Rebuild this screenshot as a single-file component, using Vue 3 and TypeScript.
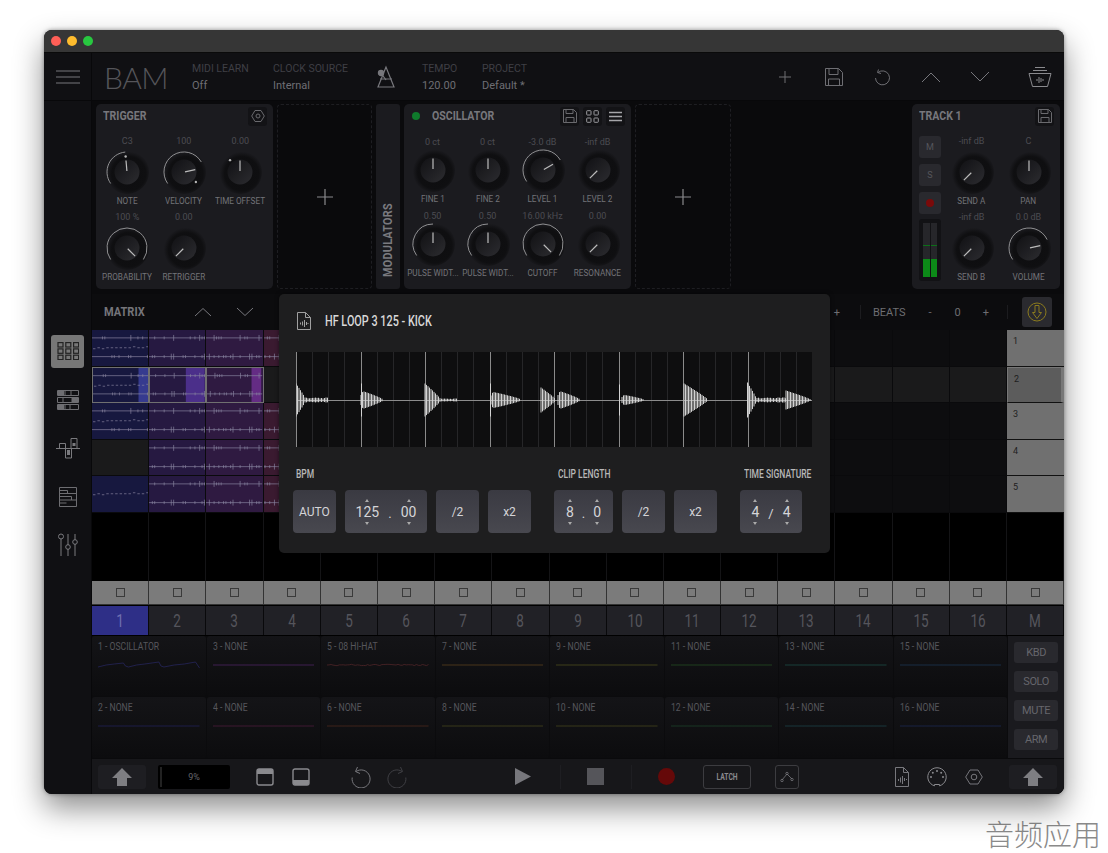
<template>
    <div class="page">
        <div class="window">
            <div class="titlebar">
                <span class="dot red"></span>
                <span class="dot yellow"></span>
                <span class="dot green"></span>
            </div>

            <header class="header">
                <div class="menu-cell">
                    <svg width="24" height="14" viewBox="0 0 24 14"><path d="M0 1h24M0 7h24M0 13h24" stroke="#77777c" stroke-width="1" /></svg>
                </div>
                <div class="logo">BAM</div>
                <div class="meta meta-midi"><span>MIDI LEARN</span><b>Off</b></div>
                <div class="meta meta-clock"><span>CLOCK SOURCE</span><b>Internal</b></div>
                <svg class="metronome" width="20" height="24" viewBox="0 0 20 24" fill="none" stroke="#77777c" stroke-width="1.2">
                    <path d="M10 2 L2 22 H18 Z" />
                    <path d="M4 14 H16" />
                    <path d="M5 8 L10 15" />
                    <circle cx="5" cy="8" r="2.6" fill="#77777c" />
                </svg>
                <div class="meta meta-tempo"><span>TEMPO</span><b>120.00</b></div>
                <div class="meta meta-project"><span>PROJECT</span><b>Default *</b></div>
                <div class="header-actions">
                    <svg width="14" height="14" viewBox="0 0 14 14"><path d="M7 1v12M1 7h12" stroke="#6e6e73" /></svg>
                    <svg class="ha-save" width="20" height="20" viewBox="0 0 20 20" fill="none" stroke="#6e6e73"><path d="M1.500 1.500h13l4 4v13h-17zM5 1.500v6h9v-6M4.500 18.500v-6.500h11v6.500" /></svg>
                    <svg class="ha-undo" width="18" height="18" viewBox="0 0 18 18" fill="none" stroke="#6e6e73"><path d="M5 4.500a7 7 0 1 1-2.500 5.500M5.500 1.500 L4.500 4.500 L8 5.500" /></svg>
                    <svg class="ha-up" width="20" height="12" viewBox="0 0 20 12" fill="none" stroke="#77777c"><path d="M1 11 L10 2 L19 11" /></svg>
                    <svg class="ha-down" width="20" height="12" viewBox="0 0 20 12" fill="none" stroke="#77777c"><path d="M1 1 L10 10 L19 1" /></svg>
                    <svg class="ha-bucket" width="24" height="22" viewBox="0 0 24 22" fill="none" stroke="#8a8a8e">
                        <path d="M7 1.500h10M5 4.500h14M1 7.500h22l-3.500 13h-15z" />
                        <path d="M9 13v2M11 11v6M13 12v4M15 13v2" />
                    </svg>
                </div>
            </header>

            <div class="body">
                <aside class="sidebar">
                    <div class="side-icon active">
                        <svg width="22" height="18" viewBox="0 0 22 18" fill="none" stroke="#222" stroke-width="1.200">
                            <template v-for="r in 3" :key="r">
                                <rect v-for="c in 3" :key="c" :x="(c - 1) * 7.800 + 1" :y="(r - 1) * 6.300 + 0.600" width="5" height="4.400" />
                            </template>
                        </svg>
                    </div>
                    <div class="side-icon">
                        <svg width="22" height="22" viewBox="0 0 22 22" fill="none" stroke="#6e6e72">
                            <path d="M.5 1.500h21v5h-21zM.5 8.500h21v5h-21zM.5 15.500h21v5h-21z" />
                            <path d="M8 1.500v5M14 1.500v5M6 8.500v5M15 8.500v5M8 15.500v5M13 15.500v5" />
                            <path d="M1 2h6v4H1zM1 16h6v4H1zM15 9h6v4h-6z" fill="#6e6e72" stroke="none" />
                        </svg>
                    </div>
                    <div class="side-icon">
                        <svg width="24" height="22" viewBox="0 0 24 22" fill="none" stroke="#7a7a7e">
                            <path d="M0 11.500h24M3.500 11.500v-5h6v5M15 11.500v-10h6v10M9.500 11.500v9.500h6v-9.500" />
                            <rect x="16.500" y="6" width="3" height="3" fill="#7a7a7e" stroke="none" />
                            <rect x="11" y="13" width="3" height="5" fill="#7a7a7e" stroke="none" />
                        </svg>
                    </div>
                    <div class="side-icon">
                        <svg width="20" height="22" viewBox="0 0 20 22" fill="none" stroke="#6e6e72">
                            <path d="M1.500 1.500h17v19h-17zM1.500 7.500h17M1.500 14h17" />
                            <path d="M1.500 4.500h8v3M1.500 10.500h12v3.500M1.500 17h7" />
                        </svg>
                    </div>
                    <div class="side-icon">
                        <svg width="22" height="24" viewBox="0 0 22 24" fill="none" stroke="#7a7a7e">
                            <path d="M4 6v17M11 1v11M11 16v7M18 1v6M18 11v12" />
                            <circle cx="4" cy="3.500" r="2.500" />
                            <circle cx="11" cy="14" r="2.300" />
                            <circle cx="18" cy="9" r="2.300" />
                        </svg>
                    </div>
                </aside>

                <main class="main">
                    <section class="devices">
                        <div class="panel trigger">
                            <div class="panel-head">
                                <span class="panel-title">TRIGGER</span>
                                <span class="tool-btn">
                                    <svg width="14" height="14" viewBox="0 0 14 14" fill="none" stroke="#6a6a6e"><path d="M4 1.500h6l3.300 5.500-3.300 5.500h-6L.7 7z" /><circle cx="7" cy="7" r="2" /></svg>
                                </span>
                            </div>
                            <div class="knob-grid three">
                                <div v-for="k in triggerKnobs" :key="k.label" class="knob-cell">
                                    <span class="knob-value">{{ k.value }}</span>
                                    <svg class="knob" width="44" height="44" viewBox="0 0 44 44">
                                        <circle cx="22" cy="22" r="22" fill="url(#knobHalo)" />
                                        <path v-if="k.arc" :d="arcPath(k.arc[0], k.arc[1])" class="knob-arc" />
                                        <circle cx="22" cy="22" r="12.500" fill="url(#knobFill)" />
                                        <path :d="pointerPath(k.angle)" class="knob-pointer" />
                                        <circle v-if="k.dot !== undefined" :cx="dotPos(k.dot).x" :cy="dotPos(k.dot).y" r="1.200" fill="#b5b5b5" />
                                    </svg>
                                    <span class="knob-label">{{ k.label }}</span>
                                </div>
                            </div>
                        </div>

                        <div class="drop-zone">
                            <svg width="16" height="16" viewBox="0 0 16 16"><path d="M8 0v16M0 8h16" stroke="#8a8a8e" stroke-width="1.200" /></svg>
                        </div>

                        <div class="modulators"><span>MODULATORS</span></div>

                        <div class="panel oscillator">
                            <div class="panel-head">
                                <span class="led"></span>
                                <span class="panel-title osc-title">OSCILLATOR</span>
                                <span class="tool-btn save">
                                    <svg width="14" height="14" viewBox="0 0 14 14" fill="none" stroke="#6a6a6e"><path d="M.5.500h10l3 3v10H.5zM3 .500v4h7v-4M3 13.500V8.500h8v5" /></svg>
                                </span>
                                <span class="tool-btn">
                                    <svg width="13" height="13" viewBox="0 0 13 13" fill="none" stroke="#9a9a9e"><rect x=".7" y=".7" width="4.300" height="4.300" rx=".6" /><rect x="8" y=".7" width="4.300" height="4.300" rx=".6" /><rect x=".7" y="8" width="4.300" height="4.300" rx=".6" /><rect x="8" y="8" width="4.300" height="4.300" rx=".6" /></svg>
                                </span>
                                <span class="tool-btn">
                                    <svg width="13" height="11" viewBox="0 0 13 11"><path d="M0 1.500h13M0 5.500h13M0 9.500h13" stroke="#a5a5a9" stroke-width="1.400" /></svg>
                                </span>
                            </div>
                            <div class="knob-grid four">
                                <div v-for="k in oscKnobs" :key="k.id" class="knob-cell">
                                    <span class="knob-value">{{ k.value }}</span>
                                    <svg class="knob" width="44" height="44" viewBox="0 0 44 44">
                                        <circle cx="22" cy="22" r="22" fill="url(#knobHalo)" />
                                        <path v-if="k.arc" :d="arcPath(k.arc[0], k.arc[1])" class="knob-arc" />
                                        <circle cx="22" cy="22" r="12.500" fill="url(#knobFill)" />
                                        <path :d="pointerPath(k.angle)" class="knob-pointer" />
                                    </svg>
                                    <span class="knob-label">{{ k.label }}</span>
                                </div>
                            </div>
                        </div>

                        <div class="drop-zone wide">
                            <svg width="16" height="16" viewBox="0 0 16 16"><path d="M8 0v16M0 8h16" stroke="#8a8a8e" stroke-width="1.200" /></svg>
                        </div>

                        <div class="spacer"></div>

                        <div class="panel track">
                            <div class="panel-head">
                                <span class="panel-title">TRACK 1</span>
                                <span class="tool-btn">
                                    <svg width="14" height="14" viewBox="0 0 14 14" fill="none" stroke="#6a6a6e"><path d="M.5.500h10l3 3v10H.5zM3 .500v4h7v-4M3 13.500V8.500h8v5" /></svg>
                                </span>
                            </div>
                            <div class="track-body">
                                <div class="track-strip">
                                    <span class="strip-btn">M</span>
                                    <span class="strip-btn">S</span>
                                    <span class="strip-btn"><i class="rec-dot"></i></span>
                                    <div class="meter">
                                        <div class="meter-ch"><i class="peak"></i><i class="level"></i></div>
                                        <div class="meter-ch"><i class="peak"></i><i class="level"></i></div>
                                    </div>
                                </div>
                                <div class="knob-grid two">
                                    <div v-for="k in trackKnobs" :key="k.label" class="knob-cell">
                                        <span class="knob-value">{{ k.value }}</span>
                                        <svg class="knob" width="44" height="44" viewBox="0 0 44 44">
                                            <circle cx="22" cy="22" r="22" fill="url(#knobHalo)" />
                                            <path v-if="k.arc" :d="arcPath(k.arc[0], k.arc[1])" class="knob-arc" />
                                            <circle cx="22" cy="22" r="12.500" fill="url(#knobFill)" />
                                            <path :d="pointerPath(k.angle)" class="knob-pointer" />
                                        </svg>
                                        <span class="knob-label">{{ k.label }}</span>
                                    </div>
                                </div>
                            </div>
                        </div>
                    </section>

                    <section class="matrix-head">
                        <span class="matrix-title">MATRIX</span>
                        <svg width="18" height="10" viewBox="0 0 18 10" fill="none" stroke="#77777c"><path d="M1 9 L9 1.500 L17 9" /></svg>
                        <svg width="18" height="10" viewBox="0 0 18 10" fill="none" stroke="#77777c"><path d="M1 1 L9 8.500 L17 1" /></svg>
                        <div class="matrix-tools">
                            <span>+</span>
                            <i class="mt-sep first"></i>
                            <span>BEATS</span>
                            <span class="mt-minus">-</span>
                            <span class="mt-num">0</span>
                            <span class="mt-plus">+</span>
                            <i class="mt-sep second"></i>
                            <span class="follow">
                                <svg width="20" height="20" viewBox="0 0 20 20" fill="none" stroke="#8a7a1e">
                                    <circle cx="10" cy="10" r="9" />
                                    <path d="M8 3.500h4v7h2.500L10 16.500 5.500 10.500H8z" />
                                </svg>
                            </span>
                        </div>
                    </section>

                    <section class="matrix">
                        <template v-for="(row, r) in clipRows" :key="r">
                            <div v-for="(clip, c) in row" :key="c" class="cell" :class="[clip.cls, { selrow: r === 1 }]">
                                <svg v-if="clip.lines.length" width="100%" height="100%" viewBox="0 0 57 36" preserveAspectRatio="none">
                                    <rect v-if="clip.head" :x="clip.head[0]" y="0" :width="clip.head[1]" height="36" :fill="clip.head[2]" />
                                    <path v-for="(d, i) in clip.lines" :key="i" :d="d" fill="none" stroke="#87839f" stroke-width=".7" />
                                </svg>
                            </div>
                            <div class="scene" :class="{ current: r === 1 }">{{ r + 1 }}</div>
                        </template>
                        <div class="matrix-empty">
                            <i v-for="n in 17" :key="n"></i>
                        </div>
                    </section>

                    <section class="stops">
                        <div v-for="n in 17" :key="n" class="stop"><i></i></div>
                    </section>

                    <section class="numbers">
                        <div v-for="n in 16" :key="n" class="number" :class="{ active: n === 1 }"><span>{{ n }}</span></div>
                        <div class="number"><span>M</span></div>
                    </section>

                    <section class="slots">
                        <div class="slot-grid">
                            <div v-for="s in slots" :key="s.num" class="slot">
                                <span class="slot-title">{{ s.num }} - {{ s.name }}</span>
                                <svg width="100%" height="12" viewBox="0 0 100 12" preserveAspectRatio="none">
                                    <path :d="s.wave" fill="none" :stroke="s.color" stroke-opacity=".65" vector-effect="non-scaling-stroke" />
                                </svg>
                            </div>
                        </div>
                        <div class="slot-modes">
                            <span v-for="m in modes" :key="m" class="mode-btn">{{ m }}</span>
                        </div>
                    </section>

                    <footer class="transport">
                        <span class="shift">
                            <svg width="20" height="18" viewBox="0 0 20 18"><path d="M10 0 L20 10 H15 V18 H5 V10 H0 Z" fill="#7e7e82" /></svg>
                        </span>
                        <div class="cpu"><i></i><span>9%</span></div>
                        <svg class="t-top" width="18" height="18" viewBox="0 0 18 18"><rect x="1" y="1" width="16" height="16" rx="2" fill="none" stroke="#8a8a8e" stroke-width="1.400" /><path d="M1 3a2 2 0 0 1 2-2h12a2 2 0 0 1 2 2v3H1z" fill="#8a8a8e" /></svg>
                        <svg class="t-bottom" width="18" height="18" viewBox="0 0 18 18"><rect x="1" y="1" width="16" height="16" rx="2" fill="none" stroke="#8a8a8e" stroke-width="1.400" /><path d="M1 12h16v3a2 2 0 0 1-2 2H3a2 2 0 0 1-2-2z" fill="#8a8a8e" /></svg>
                        <svg class="t-undo" width="22" height="22" viewBox="0 0 22 22" fill="none" stroke="#77777c"><path d="M6 5.500a9 9 0 1 1-3.800 6M7.500 1 L5.500 5.500 L10 7.500" /></svg>
                        <svg class="t-redo" width="22" height="22" viewBox="0 0 22 22" fill="none" stroke="#3f3f44"><path d="M16 5.500a9 9 0 1 0 3.800 6M14.500 1 L16.500 5.500 L12 7.500" /></svg>
                        <svg class="t-play" width="18" height="19" viewBox="0 0 18 19"><path d="M1 1 L17 9.500 L1 18 Z" fill="#77777c" /></svg>
                        <i class="t-sep first"></i>
                        <i class="t-stop"></i>
                        <i class="t-sep second"></i>
                        <i class="t-rec"></i>
                        <span class="latch"><span>LATCH</span></span>
                        <span class="curve">
                            <svg width="14" height="12" viewBox="0 0 14 12" fill="none" stroke="#77777c" stroke-width=".8"><path d="M2 9 L7 3 L12 8" /><circle cx="2" cy="9.500" r="1.200" /><circle cx="7" cy="2.500" r="1.200" /><circle cx="12" cy="8.500" r="1.200" /></svg>
                        </span>
                        <svg class="t-file" width="14" height="20" viewBox="0 0 14 20" fill="none" stroke="#77777c"><path d="M.5.500h8l5 5v14H.5zM8.500.500v5h5" /><path d="M3.500 12v2M5.500 10.500v5M7.500 9v8M9.500 11v3M11.500 12v1" /></svg>
                        <svg class="t-midi" width="20" height="20" viewBox="0 0 20 20" fill="none" stroke="#8a8a8e"><path d="M7.500 18.800a9.200 9.200 0 1 1 5 0v-1.300h-5z" /><circle cx="4" cy="10" r="1" fill="#8a8a8e" stroke="none" /><circle cx="5.800" cy="5.800" r="1" fill="#8a8a8e" stroke="none" /><circle cx="10" cy="4" r="1" fill="#8a8a8e" stroke="none" /><circle cx="14.200" cy="5.800" r="1" fill="#8a8a8e" stroke="none" /><circle cx="16" cy="10" r="1" fill="#8a8a8e" stroke="none" /></svg>
                        <svg class="t-hex" width="18" height="16" viewBox="0 0 18 16" fill="none" stroke="#77777c"><path d="M5 1h8l4.300 7-4.300 7H5L.7 8z" /><circle cx="9" cy="8" r="2.800" /></svg>
                        <span class="shift last">
                            <svg width="20" height="18" viewBox="0 0 20 18"><path d="M10 0 L20 10 H15 V18 H5 V10 H0 Z" fill="#7e7e82" /></svg>
                        </span>
                    </footer>

                    <div class="dialog">
                        <div class="dialog-head">
                            <svg width="14" height="18" viewBox="0 0 14 18" fill="none" stroke="#a0a0a0"><path d="M.5.500h8l5 5v12H.5zM8.500.500v5h5" /><path d="M3.500 10.500v2M5.500 9.500v4M7.500 8v7M9.500 10v3M11 11v1" /></svg>
                            <span class="dialog-title">HF LOOP 3 125 - KICK</span>
                        </div>
                        <svg class="wave" width="516" height="95" viewBox="0 0 516 95">
                            <rect width="516" height="95" fill="#0e0e0f" />
                            <path :d="minorGrid" stroke="#262628" stroke-width="1" />
                            <path :d="majorGrid" stroke="#8a8a8a" stroke-width="1" />
                            <path d="M0 48.500H516" stroke="#8c8c8c" stroke-width="1" />
                            <path :d="wavePath" stroke="#d2d2d2" stroke-width="1" />
                        </svg>
                        <div class="dialog-controls">
                            <div class="group">
                                <span class="group-label">BPM</span>
                                <div class="group-row">
                                    <span class="d-btn auto">AUTO</span>
                                    <div class="stepper bpm">
                                        <div class="digit"><i class="up"></i><b>125</b><i class="down"></i></div>
                                        <em>.</em>
                                        <div class="digit"><i class="up"></i><b>00</b><i class="down"></i></div>
                                    </div>
                                    <span class="d-btn">/2</span>
                                    <span class="d-btn">x2</span>
                                </div>
                            </div>
                            <div class="group clip-group">
                                <span class="group-label shifted">CLIP LENGTH</span>
                                <div class="group-row">
                                    <div class="stepper clip">
                                        <div class="digit"><i class="up"></i><b>8</b><i class="down"></i></div>
                                        <em>.</em>
                                        <div class="digit"><i class="up"></i><b>0</b><i class="down"></i></div>
                                    </div>
                                    <span class="d-btn">/2</span>
                                    <span class="d-btn">x2</span>
                                </div>
                            </div>
                            <div class="group sig-group">
                                <span class="group-label shifted">TIME SIGNATURE</span>
                                <div class="group-row">
                                    <div class="stepper sig">
                                        <div class="digit"><i class="up"></i><b>4</b><i class="down"></i></div>
                                        <em>/</em>
                                        <div class="digit"><i class="up"></i><b>4</b><i class="down"></i></div>
                                    </div>
                                </div>
                            </div>
                        </div>
                    </div>
                </main>
            </div>
        </div>
        <div class="watermark">音频应用</div>
        <svg width="0" height="0" class="defs">
            <defs>
                <linearGradient id="knobFill" x1="0" y1="0" x2="1" y2="1">
                    <stop offset="0" stop-color="#111114" />
                    <stop offset="1" stop-color="#2c2c30" />
                </linearGradient>
                <radialGradient id="knobHalo" cx=".54" cy=".54" r=".5">
                    <stop offset="0" stop-color="#0d0d0f" />
                    <stop offset=".78" stop-color="#0f0f11" />
                    <stop offset="1" stop-color="#1b1b1f" />
                </radialGradient>
            </defs>
        </svg>
    </div>
</template>

<script setup lang="ts">
interface Knob {
    id?: string;
    value: string;
    label: string;
    angle: number;
    arc?: [number, number];
    dot?: number;
}

interface Clip {
    cls: string;
    lines: string[];
    head?: [number, number, string];
}

const triggerKnobs: Knob[] = [
    { value: 'C3', label: 'NOTE', angle: -5, arc: [-125, -5], dot: -5 },
    { value: '100', label: 'VELOCITY', angle: 78, arc: [-125, 60], dot: 130 },
    { value: '0.00', label: 'TIME OFFSET', angle: 0, dot: -40 },
    { value: '100 %', label: 'PROBABILITY', angle: 135, arc: [-125, 125] },
    { value: '0.00', label: 'RETRIGGER', angle: -135 }
];

const oscKnobs: Knob[] = [
    { id: 'f1', value: '0 ct', label: 'FINE 1', angle: 0 },
    { id: 'f2', value: '0 ct', label: 'FINE 2', angle: 0 },
    { id: 'l1', value: '-3.0 dB', label: 'LEVEL 1', angle: 60, arc: [-125, 60] },
    { id: 'l2', value: '-inf dB', label: 'LEVEL 2', angle: -135 },
    { id: 'p1', value: '0.50', label: 'PULSE WIDT...', angle: 0, arc: [-125, 0] },
    { id: 'p2', value: '0.50', label: 'PULSE WIDT...', angle: 0, arc: [-125, 0] },
    { id: 'c', value: '16.00 kHz', label: 'CUTOFF', angle: 135, arc: [-125, 125] },
    { id: 'r', value: '0.00', label: 'RESONANCE', angle: -135 }
];

const trackKnobs: Knob[] = [
    { value: '-inf dB', label: 'SEND A', angle: -135 },
    { value: 'C', label: 'PAN', angle: 0 },
    { value: '-inf dB', label: 'SEND B', angle: -135 },
    { value: '0.0 dB', label: 'VOLUME', angle: 78, arc: [-125, 65] }
];

const modes = ['KBD', 'SOLO', 'MUTE', 'ARM'];

const polar = (deg: number, r: number) => {
    const a = ((deg - 90) * Math.PI) / 180;
    return { x: 22 + r * Math.cos(a), y: 22 + r * Math.sin(a) };
};

const arcPath = (from: number, to: number) => {
    const s = polar(from, 20);
    const e = polar(to, 20);
    const large = to - from > 180 ? 1 : 0;
    return `M${s.x.toFixed(2)} ${s.y.toFixed(2)}A20 20 0 ${large} 1 ${e.x.toFixed(2)} ${e.y.toFixed(2)}`;
};

const pointerPath = (deg: number) => {
    const s = polar(deg, 1);
    const e = polar(deg, 11.5);
    return `M${s.x.toFixed(2)} ${s.y.toFixed(2)}L${e.x.toFixed(2)} ${e.y.toFixed(2)}`;
};

const dotPos = (deg: number) => polar(deg, 15.5);

// small repeatable noise, the picture must not change between runs
const noise = (n: number) => {
    const v = Math.sin(n * 12.9898) * 43758.5453;
    return v - Math.floor(v);
};

const tickLine = (y: number, seed: number, dense: number) => {
    let d = `M0 ${y}H57`;
    for (let x = 1; x < 57; x += 2.4) {
        const amp = noise(seed + x);
        if (amp > dense) {
            const h = amp > 0.9 ? 3 : 1.5;
            d += `M${x.toFixed(1)} ${y - h}V${y + h}`;
        }
    }
    return d;
};

const dashLine = (y: number, seed: number) => {
    let d = '';
    for (let x = 1; x < 56; x += 4.5) {
        const off = Math.round(noise(seed + x) * 2) - 1;
        d += `M${x.toFixed(1)} ${y + off}h2.500`;
    }
    return d;
};

const lead = (row: number, seed: number) => {
    const top = tickLine(8, seed, 0.72);
    const mid = dashLine(18, seed + 3);
    const bot = tickLine(27, seed + 1, 0.72);
    return row === 4 ? [mid] : row === 3 ? [] : [top, mid, bot];
};

const pad = (seed: number) => [tickLine(8, seed, 0.55), tickLine(27, seed + 5, 0.55)];

const columns = ['blue', 'purple', 'magenta', 'wine'];

const clipRows: Clip[][] = [0, 1, 2, 3, 4].map((r) => {
    const row: Clip[] = [];
    for (let c = 0; c < 16; c++) {
        if (r === 3 && c === 0) {
            row.push({ cls: 'blank', lines: [] });
            continue;
        }
        if (c > 3 || (r === 1 && c === 3)) {
            row.push({ cls: 'empty', lines: [] });
            continue;
        }
        const lines = c === 0 ? lead(r, 7) : pad(c * 11);
        const clip: Clip = { cls: columns[c], lines };
        if (r === 1) {
            clip.cls += ' selected';
            clip.head = ([[47, 10, '#363b8f'], [37, 19.500, '#4b2f8a'], [46, 10, '#642c84']] as [number, number, string][])[c];
        }
        row.push(clip);
    }
    return row;
});

const wobble = (seed: number, size: number) => {
    let d = 'M0 6';
    for (let x = 2; x <= 100; x += 2) {
        d += `L${x} ${(6 + (noise(seed + x) - 0.5) * size).toFixed(1)}`;
    }
    return d;
};

const oscWave = 'M0 8L8 6L16 5L25 4L27 7L30 8L38 6L46 5L60 3L62 7L65 8L75 6L85 5L96 3L100 9';

const slotColors = ['#2a2a6a', '#252566', '#5a2a72', '#5a2044', '#5e2a2c', '#5a3020', '#6a4a20', '#50501f', '#5a5a20', '#50501f', '#2a5a25', '#1f4f30', '#1f5a50', '#1f4f55', '#1f3f60', '#1f2f60'];
const orders = [1, 3, 5, 7, 9, 11, 13, 15, 2, 4, 6, 8, 10, 12, 14, 16];

const slots = orders.map((num) => ({
    num,
    name: num === 1 ? 'OSCILLATOR' : num === 5 ? '08 HI-HAT' : 'NONE',
    color: slotColors[num - 1],
    wave: num === 1 ? oscWave : num === 5 ? wobble(3, 1.400) : 'M0 6H100'
}));

let minor = '';
let major = '';
for (let i = 0; i < 32; i++) {
    const x = Math.round(i * 16.125) + 0.5;
    if (i % 4 === 0) major += `M${x} 0V95`;
    else minor += `M${x} 0V95`;
}
const minorGrid = minor;
const majorGrid = major;

// [start, attack amp, length, body amp, body length]
const hits = [
    [0, 16, 10, 2, 32],
    [65, 9, 22, 0, 0],
    [129, 16, 16, 1, 32],
    [195, 8, 30, 0, 0],
    [245, 12, 15, 0, 0],
    [262, 9, 22, 0, 0],
    [326, 5, 22, 0, 0],
    [388, 16, 24, 0, 0],
    [452, 16, 9, 2, 38],
    [490, 9, 25, 0, 0]
];
const spikes = [[65, 16], [194, 16], [323, 15], [451, 17]];

let wave = '';
for (const [start, amp, len, body, bodyLen] of hits) {
    for (let x = 0; x < Math.max(len, bodyLen); x += 1.500) {
        let h = x < len ? amp * Math.pow(1 - x / len, 0.9) : 0;
        if (start === 65 || start === 195 || start === 326 || start === 262) {
            h = x < len ? amp * Math.min(1, (x + 2) / 4) * Math.pow(1 - x / len, 0.8) : 0;
        }
        if (x > len * 0.8 && body) h = Math.max(h, body * (0.5 + noise(x) * 0.5));
        if (h < 0.4) continue;
        const px = (start + x).toFixed(1);
        wave += `M${px} ${(47.500 - h).toFixed(1)}V${(48.500 + h).toFixed(1)}`;
    }
}
for (const [x, h] of spikes) wave += `M${x + 0.5} ${47.500 - h}V${48.500 + h}`;
const wavePath = wave;
</script>

<style scoped>
.page {
    width: 1108px;
    height: 853px;
    padding: 30px 0 0 44px;
    box-sizing: border-box;
    background: #fff;
    font-family: Roboto, sans-serif;
    overflow: hidden;
}

.defs {
    display: block;
}

.window {
    width: 1020px;
    height: 764px;
    border-radius: 8px;
    overflow: hidden;
    background: #0f0f12;
    box-shadow: 0 14px 30px rgba(0, 0, 0, 0.45), 0 0 4px rgba(0, 0, 0, 0.4);
    display: flex;
    flex-direction: column;
    position: relative;
}

.titlebar {
    height: 23px;
    flex-shrink: 0;
    background: #363636;
    border-bottom: 1px solid #0a0a0a;
    box-sizing: border-box;
    display: flex;
    align-items: center;
    padding-left: 7px;
    gap: 6px;
}

.dot {
    width: 10px;
    height: 10px;
    border-radius: 50%;
}

.red { background: #ff5f57; }
.yellow { background: #febc2e; }
.green { background: #28c840; }

.header {
    height: 48px;
    flex-shrink: 0;
    display: flex;
    align-items: center;
    background: #101013;
    border-bottom: 1px solid #08080a;
    box-sizing: border-box;
}

.menu-cell {
    width: 48px;
    height: 100%;
    display: flex;
    align-items: center;
    justify-content: center;
    border-right: 1px solid #08080a;
    box-sizing: border-box;
    flex-shrink: 0;
}

.logo {
    margin-left: 12px;
    width: 88px;
    font-family: Lato, sans-serif;
    font-weight: 300;
    font-size: 30px;
    letter-spacing: -0.5px;
    color: #55555a;
}

.meta {
    display: flex;
    flex-direction: column;
    gap: 4px;
}

.meta span {
    font-size: 10.500px;
    color: #3f3f45;
    white-space: nowrap;
}

.meta b {
    font-weight: 400;
    font-size: 11px;
    color: #6e6e74;
}

.meta-midi { width: 81px; }
.meta-clock { width: 103px; }
.metronome { margin-right: 26px; }
.meta-tempo { width: 60px; }

.header-actions {
    margin-left: auto;
    display: flex;
    align-items: center;
    padding-right: 12px;
}

.ha-save { margin-left: 32px; }
.ha-undo { margin-left: 29px; }
.ha-up { margin-left: 30px; }
.ha-down { margin-left: 29px; }
.ha-bucket { margin-left: 38px; }

.body {
    flex: 1;
    display: flex;
    min-height: 0;
}

.sidebar {
    width: 48px;
    flex-shrink: 0;
    background: #101013;
    box-sizing: border-box;
    border-right: 1px solid #08080a;
    display: flex;
    flex-direction: column;
    align-items: center;
    padding-top: 234px;
    gap: 16px;
}

.side-icon {
    width: 33px;
    height: 32.500px;
    display: flex;
    align-items: center;
    justify-content: center;
    border-radius: 3px;
}

.side-icon.active {
    background: #777;
}

.main {
    flex: 1;
    min-width: 0;
    position: relative;
    display: flex;
    flex-direction: column;
    background: #000;
}

.devices {
    height: 193px;
    flex-shrink: 0;
    box-sizing: border-box;
    padding: 3px 4px 5px 4px;
    display: flex;
    gap: 4px;
    background: #0a0a0c;
}

.panel {
    background: #1b1b1f;
    border-radius: 5px;
    box-sizing: border-box;
    flex-shrink: 0;
}

.trigger { width: 177px; }
.oscillator { width: 227px; }
.track { width: 148px; }

.panel-head {
    display: flex;
    align-items: center;
    height: 24px;
    padding: 0 6px 0 7px;
    gap: 4px;
}

.panel-title {
    font-weight: 700;
    font-size: 12px;
    color: #77777c;
    margin-right: auto;
    display: inline-block;
    transform: scaleX(0.88);
    transform-origin: 0 50%;
}

.osc-title {
    margin-left: 8px;
}

.led {
    width: 8px;
    height: 8px;
    margin-left: 1px;
    border-radius: 50%;
    background: #0f7a2c;
}

.tool-btn {
    width: 19px;
    height: 19px;
    border-radius: 3px;
    background: #131316;
    display: flex;
    align-items: center;
    justify-content: center;
}

.knob-grid {
    display: grid;
    justify-items: center;
}

.three {
    grid-template-columns: repeat(3, 56.500px);
    padding: 7px 0 0 3px;
    row-gap: 4px;
}

.four {
    grid-template-columns: repeat(4, 55px);
    padding: 8px 0 0 1px;
    row-gap: 5px;
}

.two {
    grid-template-columns: repeat(2, 57px);
    row-gap: 4px;
    padding-top: 7px;
}

.knob-cell {
    display: flex;
    flex-direction: column;
    align-items: center;
    width: 100%;
}

.knob-value {
    font-size: 9px;
    line-height: 12px;
    color: #4c4c52;
    white-space: nowrap;
}

.knob {
    display: block;
    margin-top: 3px;
}

.four .knob {
    margin-top: 0;
}

.knob-arc {
    fill: none;
    stroke: #909092;
    stroke-width: 1;
}

.knob-pointer {
    stroke: #bcbcbc;
    stroke-width: 1.200;
}

.knob-label {
    font-size: 9.500px;
    line-height: 12px;
    margin-top: 1px;
    color: #737378;
    white-space: nowrap;
    display: block;
    transform: scaleX(0.86);
}

.drop-zone {
    width: 95px;
    flex-shrink: 0;
    border: 1px dashed #1e1e22;
    border-radius: 4px;
    box-sizing: border-box;
    display: flex;
    align-items: center;
    justify-content: center;
}

.drop-zone.wide {
    width: 96px;
}

.modulators {
    width: 24px;
    flex-shrink: 0;
    background: #1b1b1f;
    border-radius: 3px;
    display: flex;
    justify-content: center;
    align-items: flex-end;
    padding-bottom: 8px;
    box-sizing: border-box;
}

.modulators span {
    writing-mode: vertical-rl;
    transform: rotate(180deg) scaleY(0.9);
    font-weight: 700;
    font-size: 12px;
    color: #7a7a7f;
    letter-spacing: 0.3px;
}

.spacer {
    flex: 1;
}

.track-body {
    display: flex;
    padding-left: 7px;
}

.track-strip {
    width: 22px;
    flex-shrink: 0;
    display: flex;
    flex-direction: column;
    gap: 6px;
    padding-top: 8px;
    margin-right: 2px;
}

.strip-btn {
    height: 22px;
    border-radius: 3px;
    background: #29292e;
    color: #55555b;
    font-size: 9px;
    display: flex;
    align-items: center;
    justify-content: center;
}

.rec-dot {
    width: 8px;
    height: 8px;
    border-radius: 50%;
    background: #7a0a0a;
}

.meter {
    height: 62px;
    background: #121215;
    border-radius: 3px;
    display: flex;
    justify-content: center;
    gap: 1px;
    padding: 4px 0;
    box-sizing: border-box;
    margin-top: -1px;
}

.meter-ch {
    width: 6.500px;
    background: #26262a;
    display: flex;
    flex-direction: column;
    justify-content: flex-end;
}

.meter-ch .peak {
    height: 1px;
    background: #0c6f18;
    margin-bottom: 13px;
}

.meter-ch .level {
    height: 18px;
    background: #0c8a18;
}

.matrix-head {
    height: 36px;
    flex-shrink: 0;
    background: #0c0c0e;
    display: flex;
    align-items: center;
    padding-left: 12px;
    box-sizing: border-box;
}

.matrix-title {
    font-weight: 700;
    font-size: 12px;
    color: #75757a;
    width: 90px;
    transform: scaleX(0.92);
    transform-origin: 0 50%;
}

.matrix-head svg + svg {
    margin-left: 24px;
}

.matrix-tools {
    margin-left: auto;
    display: flex;
    align-items: center;
    font-size: 11px;
    color: #6e6e72;
    padding-right: 12px;
}

.mt-sep {
    width: 1px;
    height: 14px;
    background: #1c1c1f;
}

.mt-sep.first { margin: 0 12px 0 20px; }
.mt-sep.second { margin: 0 14px 0 18px; }

.mt-minus { margin-left: 23px; }
.mt-num { margin-left: 23px; }
.mt-plus { margin-left: 22px; }

.follow {
    width: 30px;
    height: 30px;
    border-radius: 3px;
    background: #2a2a2f;
    display: flex;
    align-items: center;
    justify-content: center;
}

.matrix {
    height: 251px;
    flex-shrink: 0;
    display: grid;
    grid-template-columns: repeat(16, 57.200px) 1fr;
    grid-template-rows: repeat(5, 36.500px) 1fr;
}

.cell {
    box-sizing: border-box;
    border: 1px solid #0a0a0c;
    border-width: 0 1px 1px 0;
    overflow: hidden;
}

.cell svg {
    display: block;
}

.cell.empty { background: #0d0d0f; }
.cell.empty.selrow { background: #1a1a1b; }
.cell.blank { background: #1a1a1b; }
.cell.blue { background: #17183f; }
.cell.purple { background: #261941; }
.cell.magenta { background: #2f1a41; }
.cell.wine { background: #3a1a30; }

.cell.selected {
    border: 1px solid #707070;
}

.scene {
    background: #707070;
    color: #1e1e1e;
    font-size: 9px;
    padding: 6px 0 0 6px;
    box-sizing: border-box;
    border-bottom: 1px solid #111;
}

.scene.current {
    background: #5c5c5c;
    border: 1px solid #777;
    border-width: 1px 3px 1px 1px;
    border-bottom-color: #111;
}

.matrix-empty {
    grid-column: 1 / -1;
    grid-row: 6;
    display: grid;
    grid-template-columns: repeat(16, 57.200px) 1fr;
}

.matrix-empty i {
    border-right: 1px solid #141416;
}

.stops,
.numbers {
    flex-shrink: 0;
    display: grid;
    grid-template-columns: repeat(16, 57.200px) 1fr;
}

.stop {
    height: 24px;
    background: #7b7b7b;
    border-right: 1px solid #333;
    border-bottom: 1px solid #333;
    box-sizing: border-box;
    display: flex;
    align-items: center;
    justify-content: center;
    margin-bottom: 1px;
}

.stop i {
    width: 7px;
    height: 7px;
    border: 1px solid #3a3a3a;
    display: block;
}

.number {
    height: 29px;
    background: #212126;
    border-right: 1px solid #09090b;
    box-sizing: border-box;
    display: flex;
    align-items: center;
    justify-content: center;
    font-size: 18px;
    color: #55555c;
}

.number span {
    display: block;
    transform: scaleX(0.75);
}

.number.active {
    background: #2e2f87;
    color: #7070b0;
}

.slots {
    flex-shrink: 0;
    height: 122px;
    display: flex;
    margin-top: 1px;
    background: #0b0b0d;
}

.slot-grid {
    width: 915.200px;
    display: grid;
    grid-template-columns: repeat(8, 1fr);
    grid-template-rows: 60px 61px;
    gap: 1px;
}

.slot {
    background: linear-gradient(to bottom, #141417, #0c0c0e);
    border-radius: 3px;
    padding: 5px 6px;
    box-sizing: border-box;
    display: flex;
    flex-direction: column;
    gap: 6px;
}

.slot svg {
    display: block;
}

.slot-title {
    font-size: 10.500px;
    line-height: 12px;
    color: #56565c;
    white-space: nowrap;
    display: block;
    transform: scaleX(0.82);
    transform-origin: 0 50%;
}

.slot-modes {
    flex: 1;
    background: #1a1a1e;
    display: flex;
    flex-direction: column;
    align-items: center;
    gap: 8px;
    padding-top: 6px;
    box-sizing: border-box;
    margin-left: 1px;
}

.mode-btn {
    width: 44px;
    height: 21px;
    background: #29292e;
    border-radius: 3px;
    color: #66666c;
    font-size: 11px;
    letter-spacing: -0.4px;
    display: flex;
    align-items: center;
    justify-content: center;
}

.transport {
    flex: 1;
    background: #17171a;
    border-top: 1px solid #0a0a0c;
    display: flex;
    align-items: center;
    padding-left: 6px;
    box-sizing: border-box;
    position: relative;
}

.shift {
    width: 48px;
    height: 24px;
    border-radius: 3px;
    background: #1e1e22;
    display: flex;
    align-items: center;
    justify-content: center;
    flex-shrink: 0;
}

.cpu {
    width: 72px;
    height: 24px;
    margin-left: 12px;
    background: #000;
    border-radius: 2px;
    position: relative;
    display: flex;
    align-items: center;
    justify-content: center;
    font-size: 9px;
    color: #66666c;
}

.cpu i {
    width: 2px;
    height: 20px;
    background: #222;
    position: absolute;
    left: 2px;
    top: 2px;
}

.t-top { margin-left: 26px; }
.t-bottom { margin-left: 18px; }
.t-undo { margin-left: 40px; }
.t-redo { margin-left: 14px; }
.t-play { margin-left: 106px; }

.t-sep {
    width: 1px;
    height: 24px;
    background: #1e1e22;
}

.t-sep.first { margin-left: 28px; }
.t-sep.second { margin-left: 27px; }

.t-stop {
    width: 17px;
    height: 17px;
    background: #55555a;
    margin-left: 26px;
}

.t-rec {
    width: 17px;
    height: 17px;
    border-radius: 50%;
    background: #650909;
    margin-left: 26px;
}

.latch {
    width: 48px;
    height: 24px;
    margin-left: 28px;
    border: 1px solid #3c3c40;
    border-radius: 3px;
    box-sizing: border-box;
    display: flex;
    align-items: center;
    justify-content: center;
    font-weight: 700;
    font-size: 9px;
    color: #8a8a8e;
}

.latch span {
    display: block;
    transform: scaleX(0.75);
}

.curve {
    width: 24px;
    height: 24px;
    margin-left: 24px;
    border: 1px solid #3c3c40;
    border-radius: 3px;
    box-sizing: border-box;
    display: flex;
    align-items: center;
    justify-content: center;
}

.t-file { margin-left: 96px; }
.t-midi { margin-left: 18px; }
.t-hex { margin-left: 18px; }

.shift.last {
    margin-left: 26px;
}

.dialog {
    position: absolute;
    left: 187px;
    top: 193px;
    width: 551px;
    height: 259px;
    background: #1e1e1f;
    border-radius: 5px;
    box-sizing: border-box;
    padding: 17px 18px 0 17px;
    box-shadow: 0 0 4px rgba(0, 0, 0, 0.5);
}

.dialog-head {
    display: flex;
    align-items: center;
    gap: 14px;
    height: 20px;
    color: #d8d8d8;
    padding-left: 1px;
}

.dialog-title {
    font-weight: 500;
    font-size: 15.500px;
    white-space: nowrap;
    transform: scaleX(0.7);
    transform-origin: 0 50%;
}

.wave {
    display: block;
    margin-top: 21px;
}

.dialog-controls {
    display: flex;
    margin: 20px 0 0 -3px;
}

.group-label {
    display: block;
    width: 0;
    margin-left: 3px;
    font-weight: 500;
    font-size: 12.500px;
    line-height: 14px;
    color: #b8b8b8;
    white-space: nowrap;
    transform: scaleX(0.68);
    transform-origin: 0 50%;
}

.group-label.shifted {
    margin-left: 4px;
}

.group-row {
    display: flex;
    gap: 9px;
    margin-top: 9px;
}

.clip-group { margin-left: 23px; }
.sig-group { margin-left: 23px; }

.d-btn {
    width: 43px;
    height: 43px;
    border-radius: 4px;
    background: linear-gradient(to bottom, #3a3a42, #48484f);
    display: flex;
    align-items: center;
    justify-content: center;
    font-size: 12px;
    color: #d5d5d8;
}

.stepper {
    height: 43px;
    border-radius: 4px;
    background: linear-gradient(to bottom, #3a3a42, #48484f);
    display: flex;
    align-items: center;
    justify-content: center;
    color: #d5d5d8;
}

.bpm { width: 82px; gap: 9px; }
.clip { width: 59px; gap: 8px; }
.sig { width: 62px; gap: 9px; }

.stepper em {
    font-style: normal;
    font-size: 13px;
    padding-top: 3px;
}

.digit {
    display: flex;
    flex-direction: column;
    align-items: center;
    gap: 2px;
}

.digit b {
    font-weight: 400;
    font-size: 14px;
    line-height: 16px;
}

.digit i {
    width: 0;
    height: 0;
    border-left: 2.500px solid transparent;
    border-right: 2.500px solid transparent;
}

.digit .up {
    border-bottom: 3px solid #aaa;
}

.digit .down {
    border-top: 3px solid #aaa;
}

.watermark {
    margin-top: 22px;
    width: 1057px;
    text-align: right;
    font-family: "Noto Sans CJK SC", sans-serif;
    font-weight: 300;
    font-size: 29px;
    line-height: 34px;
    color: #8a8a8a;
}
</style>

<style>
html,
body {
    margin: 0;
    background: #fff;
    overflow: hidden;
}
</style>
